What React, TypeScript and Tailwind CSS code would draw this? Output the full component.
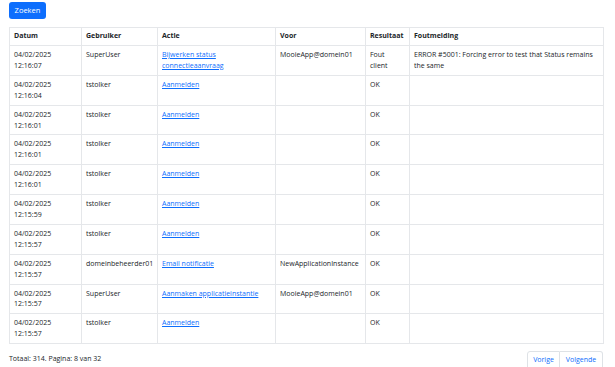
import React from "react";

const rows = [
  { d: "04/02/2025", t: "12:16:07", u: "SuperUser", a: "Bijwerken status connectieaanvraag", v: "MooieApp@domein01", r: "Fout client", f: "ERROR #5001: Forcing error to test that Status remains the same" },
  { d: "04/02/2025", t: "12:16:04", u: "tstolker", a: "Aanmelden", v: "", r: "OK", f: "" },
  { d: "04/02/2025", t: "12:16:01", u: "tstolker", a: "Aanmelden", v: "", r: "OK", f: "" },
  { d: "04/02/2025", t: "12:16:01", u: "tstolker", a: "Aanmelden", v: "", r: "OK", f: "" },
  { d: "04/02/2025", t: "12:16:01", u: "tstolker", a: "Aanmelden", v: "", r: "OK", f: "" },
  { d: "04/02/2025", t: "12:15:59", u: "tstolker", a: "Aanmelden", v: "", r: "OK", f: "" },
  { d: "04/02/2025", t: "12:15:57", u: "tstolker", a: "Aanmelden", v: "", r: "OK", f: "" },
  { d: "04/02/2025", t: "12:15:57", u: "domeinbeheerder01", a: "Email notificatie", v: "NewApplicationInstance", r: "OK", f: "" },
  { d: "04/02/2025", t: "12:15:57", u: "SuperUser", a: "Aanmaken applicatieinstantie", v: "MooieApp@domein01", r: "OK", f: "" },
  { d: "04/02/2025", t: "12:15:57", u: "tstolker", a: "Aanmelden", v: "", r: "OK", f: "" },
];

const td = "border border-[#e5e7ea] px-[4px] pt-[4px] pb-[3px] align-top";
const th = "border border-[#e5e7ea] px-[4px] h-[18px] text-left font-bold align-middle";

export default function App() {
  return (
    <div
      className="w-[615px] h-[367px] overflow-hidden bg-white text-[#212529] text-[7px] leading-[10.9px] px-[9px] pt-[2px]"
      style={{ fontFamily: '"Open Sans", "Noto Sans", sans-serif' }}
    >
      <button className="bg-[#0d6efd] text-white rounded-[3px] w-[37px] h-[17px] flex items-center justify-center text-[7.5px]">
        Zoeken
      </button>
      <table className="table-fixed border-collapse w-[594px] mt-[8px]">
        <colgroup>
          <col className="w-[72px]" />
          <col className="w-[76px]" />
          <col className="w-[118px]" />
          <col className="w-[90px]" />
          <col className="w-[44px]" />
          <col className="w-[194px]" />
        </colgroup>
        <thead>
          <tr>
            <th className={th}>Datum</th>
            <th className={th}>Gebruiker</th>
            <th className={th}>Actie</th>
            <th className={th}>Voor</th>
            <th className={th}>Resultaat</th>
            <th className={th}>Foutmelding</th>
          </tr>
        </thead>
        <tbody>
          {rows.map((r, i) => (
            <tr key={i}>
              <td className={td}>
                {r.d}
                <br />
                {r.t}
              </td>
              <td className={td}>{r.u}</td>
              <td className={td}>
                <a href="#" className="text-[#0d6efd] underline">
                  {r.a}
                </a>
              </td>
              <td className={td}>{r.v}</td>
              <td className={td}>
                <span className="inline-block w-min">{r.r}</span>
              </td>
              <td className={td}>{r.f}</td>
            </tr>
          ))}
        </tbody>
      </table>
      <div className="flex items-start justify-between mt-[7px] w-[594px]">
        <div className="pt-[3px]">Totaal: 314. Pagina: 8 van 32</div>
        <div className="flex">
          <span className="border border-[#dee2e6] rounded-l-[3px] text-[#0d6efd] px-[4px] pt-[3px] h-[20px] w-[33px] text-center">Vorige</span>
          <span className="border border-l-0 border-[#dee2e6] rounded-r-[3px] text-[#0d6efd] px-[4px] pt-[3px] h-[20px] w-[43px] text-center">Volgende</span>
        </div>
      </div>
    </div>
  );
}
